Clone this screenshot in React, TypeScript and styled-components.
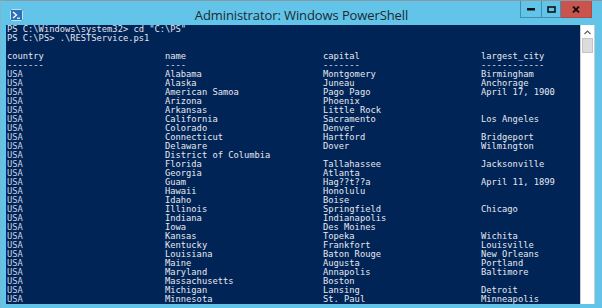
import React from "react";
import styled, { createGlobalStyle } from "styled-components";

const GlobalStyle = createGlobalStyle`
  html, body {
    margin: 0;
    padding: 0;
    background: #ffffff;
  }
`;

const Window = styled.div`
  display: flex;
  flex-direction: column;
  width: 602px;
  height: 308px;
  box-sizing: border-box;
  background: #62c4e8;
  border-top: 1px solid #8a9aa2;
  border-left: 1px solid #7fb6cc;
  overflow: hidden;
`;

const TitleBar = styled.div`
  position: relative;
  display: flex;
  align-items: center;
  justify-content: center;
  height: 24px;
  flex-shrink: 0;
`;

const AppIcon = styled.svg`
  position: absolute;
  left: 9px;
  top: 8px;
`;

const Title = styled.span`
  font-family: "Open Sans", "Liberation Sans", sans-serif;
  font-size: 13px;
  color: #1b2a33;
  margin-top: 3px;
  letter-spacing: -0.1px;
`;

const Controls = styled.div`
  position: absolute;
  right: 10px;
  top: 0;
  display: flex;
  height: 17px;
`;

const CtrlButton = styled.div<{ $close?: boolean; $w: number }>`
  display: flex;
  align-items: center;
  justify-content: center;
  width: ${(p) => p.$w}px;
  height: 100%;
  box-sizing: border-box;
  background: ${(p) => (p.$close ? "#c9544e" : "#62c4e8")};
  border: 1px solid ${(p) => (p.$close ? "#b5493f" : "#3f8fae")};
  border-top: none;
  & + & {
    border-left: none;
  }
`;

const Body = styled.div`
  display: flex;
  flex: 1;
  min-height: 0;
  padding: 0 7px 4px 5px;
`;

const Console = styled.div`
  flex: 1;
  background: #012456;
  padding: 0 0 0 1px;
  overflow: hidden;
  font-family: "DejaVu Sans Mono", "Liberation Mono", monospace;
  font-size: 8.75px;
  line-height: 9px;
  color: #e4e6ee;
`;

const Line = styled.div`
  height: 9px;
  white-space: pre;
`;

const Row = styled.div`
  display: grid;
  grid-template-columns: repeat(4, 158px);
  height: 9px;
  white-space: pre;
`;

const Cell = styled.span<{ $dim?: boolean }>`
  color: ${(p) => (p.$dim ? "#c9d2e4" : "#e6e8ef")};
`;

const Scrollbar = styled.div`
  display: flex;
  flex-direction: column;
  width: 13px;
  background: #ffffff;
  border-left: 1px solid #c8ccd2;
  border-right: 1px solid #c8ccd2;
  padding-top: 2px;
`;

const ScrollArrow = styled.div`
  display: flex;
  align-items: center;
  justify-content: center;
  height: 11px;
`;

const ScrollThumb = styled.div`
  height: 13px;
  margin: 0 1px;
  background: #dcdcdc;
  border: 1px solid #c4c4c4;
`;

const header = ["country", "name", "capital", "largest_city"];
const dashes = ["-------", "----", "-------", "------------"];

const rows: [string, string, string][] = [
  ["Alabama", "Montgomery", "Birmingham"],
  ["Alaska", "Juneau", "Anchorage"],
  ["American Samoa", "Pago Pago", "April 17, 1900"],
  ["Arizona", "Phoenix", ""],
  ["Arkansas", "Little Rock", ""],
  ["California", "Sacramento", "Los Angeles"],
  ["Colorado", "Denver", ""],
  ["Connecticut", "Hartford", "Bridgeport"],
  ["Delaware", "Dover", "Wilmington"],
  ["District of Columbia", "", ""],
  ["Florida", "Tallahassee", "Jacksonville"],
  ["Georgia", "Atlanta", ""],
  ["Guam", "Hag??t??a", "April 11, 1899"],
  ["Hawaii", "Honolulu", ""],
  ["Idaho", "Boise", ""],
  ["Illinois", "Springfield", "Chicago"],
  ["Indiana", "Indianapolis", ""],
  ["Iowa", "Des Moines", ""],
  ["Kansas", "Topeka", "Wichita"],
  ["Kentucky", "Frankfort", "Louisville"],
  ["Louisiana", "Baton Rouge", "New Orleans"],
  ["Maine", "Augusta", "Portland"],
  ["Maryland", "Annapolis", "Baltimore"],
  ["Massachusetts", "Boston", ""],
  ["Michigan", "Lansing", "Detroit"],
  ["Minnesota", "St. Paul", "Minneapolis"],
  ["Mississippi", "Jackson", "Jackson"],
];

export default function App() {
  return (
    <>
      <GlobalStyle />
      <Window>
        <TitleBar>
          <AppIcon width="13" height="12" viewBox="0 0 13 12">
            <rect x="0" y="0" width="13" height="12" rx="1" fill="#2a6fb8" />
            <rect x="0.5" y="0.5" width="12" height="11" rx="1" fill="none" stroke="#bfe3f5" strokeWidth="1" />
            <path d="M3 3 L6.5 6 L3 9" stroke="#ffffff" strokeWidth="1.4" fill="none" />
            <path d="M7 9.2 H10" stroke="#ffffff" strokeWidth="1.2" />
          </AppIcon>
          <Title>Administrator: Windows PowerShell</Title>
          <Controls>
            <CtrlButton $w={22}>
              <svg width="8" height="3" viewBox="0 0 8 3">
                <rect x="0" y="0" width="8" height="2.5" fill="#111" />
              </svg>
            </CtrlButton>
            <CtrlButton $w={19}>
              <svg width="9" height="7" viewBox="0 0 9 7">
                <rect x="1" y="1" width="7" height="5" fill="none" stroke="#111" strokeWidth="1.6" />
              </svg>
            </CtrlButton>
            <CtrlButton $close $w={31}>
              <svg width="8" height="7" viewBox="0 0 8 7">
                <path d="M1 0.5 L7 6.5 M7 0.5 L1 6.5" stroke="#111" strokeWidth="1.8" />
              </svg>
            </CtrlButton>
          </Controls>
        </TitleBar>
        <Body>
          <Console>
            <Line>{'PS C:\\Windows\\system32> cd "C:\\PS"'}</Line>
            <Line>{"PS C:\\PS> .\\RESTService.ps1"}</Line>
            <Line> </Line>
            <Row>
              {header.map((h) => (
                <Cell key={h}>{h}</Cell>
              ))}
            </Row>
            <Row>
              {dashes.map((d, i) => (
                <Cell key={i}>{d}</Cell>
              ))}
            </Row>
            {rows.map(([name, capital, city]) => (
              <Row key={name}>
                <Cell $dim>USA</Cell>
                <Cell>{name}</Cell>
                <Cell>{capital}</Cell>
                <Cell>{city}</Cell>
              </Row>
            ))}
          </Console>
          <Scrollbar>
            <ScrollArrow>
              <svg width="7" height="5" viewBox="0 0 7 5">
                <path d="M0.5 4 L3.5 1 L6.5 4" stroke="#606060" strokeWidth="1.2" fill="none" />
              </svg>
            </ScrollArrow>
            <ScrollThumb />
          </Scrollbar>
        </Body>
      </Window>
    </>
  );
}
